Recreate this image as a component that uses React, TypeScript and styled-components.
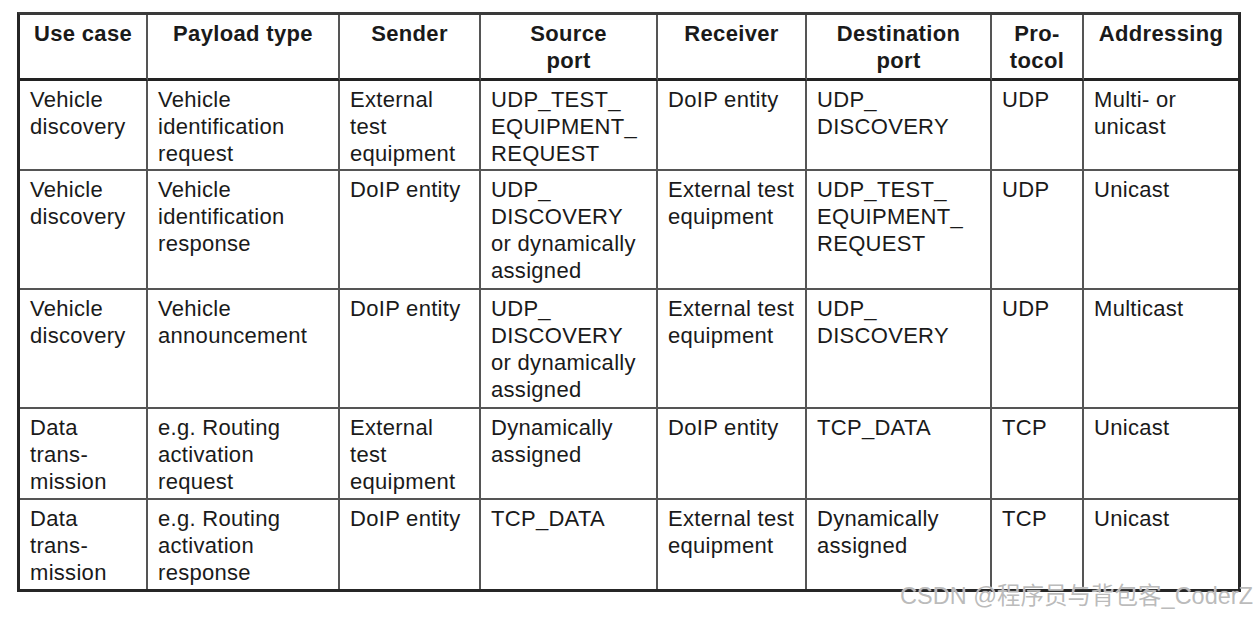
import React from "react";
import styled, { createGlobalStyle } from "styled-components";

const GlobalStyle = createGlobalStyle`
  html, body {
    margin: 0;
    padding: 0;
    background: #ffffff;
  }
  body {
    font-family: "Liberation Sans", Arial, sans-serif;
    color: #1a1a1a;
  }
`;

const Page = styled.div`
  position: relative;
  width: 1257px;
  height: 618px;
  padding: 12px 0 0 17px;
  box-sizing: border-box;
  overflow: hidden;
`;

const Table = styled.div`
  display: grid;
  grid-template-columns: 128px 192px 141px 177px 149px 185px 92px 154px;
  grid-template-rows: 66px 90px 119px 119px 91px 89px;
  width: 1224px;
  box-sizing: border-box;
  border: 3px solid #262626;
  border-top-color: #3a3a3a;
`;

const HeadCell = styled.div<{ $last?: boolean }>`
  box-sizing: border-box;
  padding: 5px 4px 0;
  border-right: ${(p) => (p.$last ? "none" : "2px solid #555")};
  border-bottom: 3px solid #222;
  font-weight: 700;
  font-size: 22px;
  line-height: 27px;
  letter-spacing: 0.35px;
  text-align: center;
`;

const Cell = styled.div<{ $last?: boolean; $lastRow?: boolean }>`
  box-sizing: border-box;
  padding: 5px 4px 0 10px;
  border-right: ${(p) => (p.$last ? "none" : "2px solid #555")};
  border-bottom: ${(p) => (p.$lastRow ? "none" : "2px solid #555")};
  font-size: 22px;
  line-height: 27px;
  letter-spacing: 0.3px;
  white-space: nowrap;
`;

const Line = styled.div``;

const Watermark = styled.div`
  position: absolute;
  right: 4px;
  top: 581px;
  font-family: "Liberation Sans", "Noto Sans CJK SC", sans-serif;
  font-size: 23.5px;
  line-height: 30px;
  color: rgba(175, 175, 175, 0.85);
  text-shadow: 0 0 1px #ffffff;
  white-space: nowrap;
`;

const headers: string[][] = [
  ["Use case"],
  ["Payload type"],
  ["Sender"],
  ["Source", "port"],
  ["Receiver"],
  ["Destination", "port"],
  ["Pro-", "tocol"],
  ["Addressing"],
];

const rows: string[][][] = [
  [
    ["Vehicle", "discovery"],
    ["Vehicle", "identification", "request"],
    ["External", "test", "equipment"],
    ["UDP_TEST_", "EQUIPMENT_", "REQUEST"],
    ["DoIP entity"],
    ["UDP_", "DISCOVERY"],
    ["UDP"],
    ["Multi- or", "unicast"],
  ],
  [
    ["Vehicle", "discovery"],
    ["Vehicle", "identification", "response"],
    ["DoIP entity"],
    ["UDP_", "DISCOVERY", "or dynamically", "assigned"],
    ["External test", "equipment"],
    ["UDP_TEST_", "EQUIPMENT_", "REQUEST"],
    ["UDP"],
    ["Unicast"],
  ],
  [
    ["Vehicle", "discovery"],
    ["Vehicle", "announcement"],
    ["DoIP entity"],
    ["UDP_", "DISCOVERY", "or dynamically", "assigned"],
    ["External test", "equipment"],
    ["UDP_", "DISCOVERY"],
    ["UDP"],
    ["Multicast"],
  ],
  [
    ["Data", "trans-", "mission"],
    ["e.g. Routing", "activation", "request"],
    ["External", "test", "equipment"],
    ["Dynamically", "assigned"],
    ["DoIP entity"],
    ["TCP_DATA"],
    ["TCP"],
    ["Unicast"],
  ],
  [
    ["Data", "trans-", "mission"],
    ["e.g. Routing", "activation", "response"],
    ["DoIP entity"],
    ["TCP_DATA"],
    ["External test", "equipment"],
    ["Dynamically", "assigned"],
    ["TCP"],
    ["Unicast"],
  ],
];

export default function App() {
  return (
    <>
      <GlobalStyle />
      <Page>
        <Table>
          {headers.map((h, i) => (
            <HeadCell key={"h" + i} $last={i === headers.length - 1}>
              {h.map((l, j) => (
                <Line key={j}>{l}</Line>
              ))}
            </HeadCell>
          ))}
          {rows.map((row, r) =>
            row.map((cell, c) => (
              <Cell
                key={r + "-" + c}
                $last={c === row.length - 1}
                $lastRow={r === rows.length - 1}
              >
                {cell.map((l, j) => (
                  <Line key={j}>{l}</Line>
                ))}
              </Cell>
            ))
          )}
        </Table>
        <Watermark>CSDN @程序员与背包客_CoderZ</Watermark>
      </Page>
    </>
  );
}
